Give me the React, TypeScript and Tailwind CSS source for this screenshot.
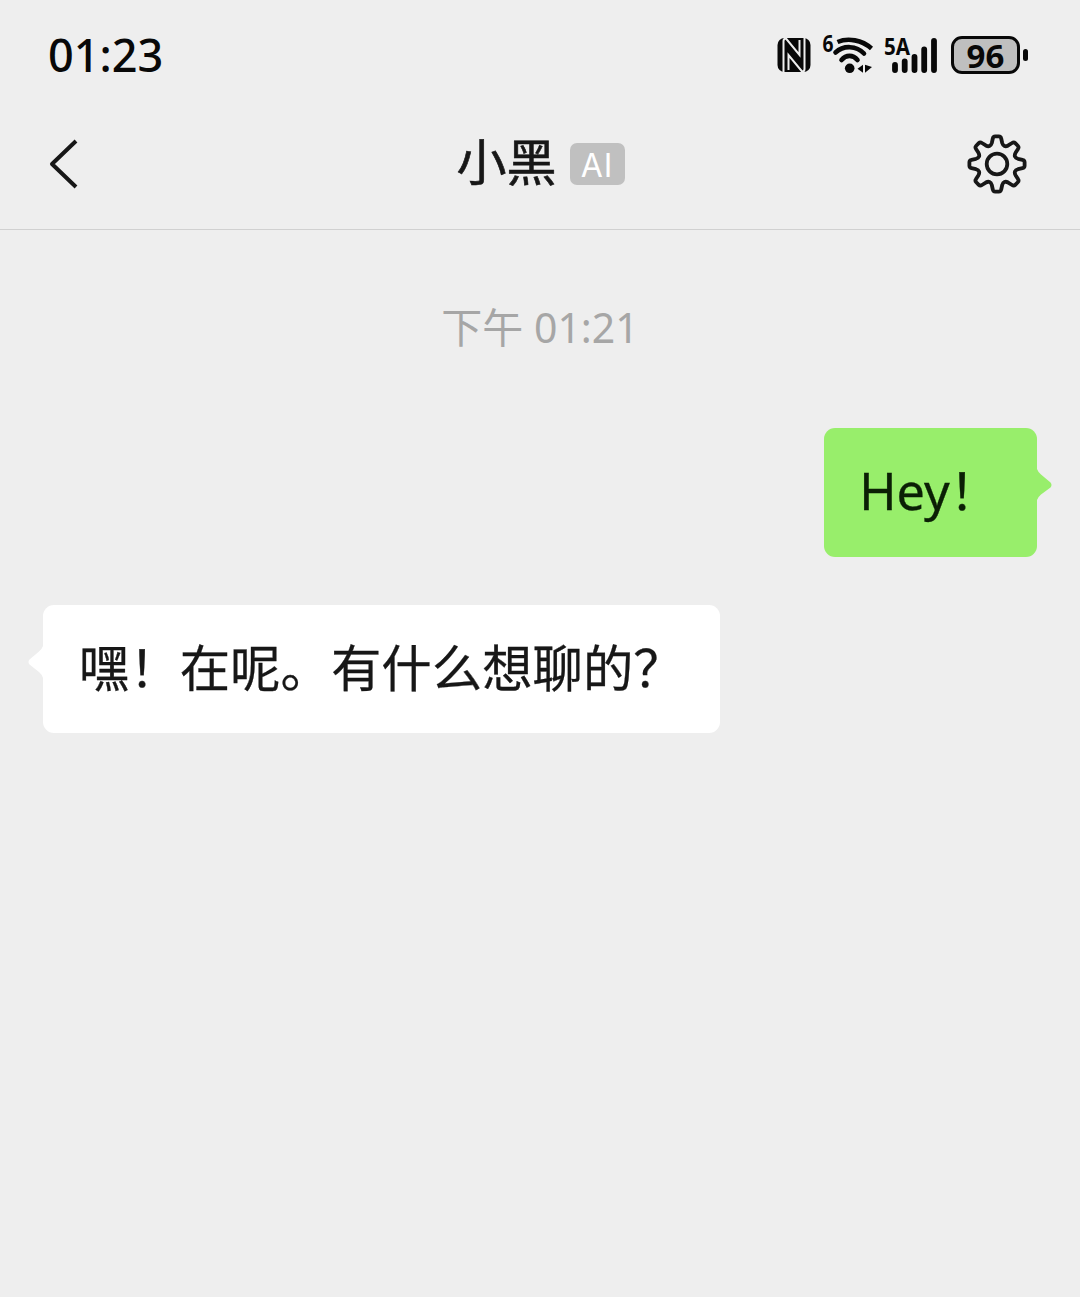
import React from 'react';

const messages = [
  { id: 1, mine: true, text: 'Hey！' },
  { id: 2, mine: false, text: '嘿！在呢。有什么想聊的？' },
];

// one tooth of the gear, pointing up, then the notch towards the next one
const tooth: number[][] = [
  [-5.2, -21], [-4.2, -25.5], [-3.8, -27.6], [-1.8, -27.6],
  [1.8, -27.6], [3.8, -27.6], [4.2, -25.5],
  [5.2, -21], [6.2, -17.8],
];

function gearPath() {
  let d = '';
  for (let i = 0; i < 8; i++) {
    const a = (i * Math.PI) / 4;
    const p = tooth.map(([x, y]) => {
      const px = 30 + x * Math.cos(a) - y * Math.sin(a);
      const py = 30 + x * Math.sin(a) + y * Math.cos(a);
      return `${px.toFixed(2)} ${py.toFixed(2)}`;
    });
    const b = a + Math.PI / 4;
    const nx = 30 + -6.2 * Math.cos(b) + 17.8 * Math.sin(b);
    const ny = 30 + -6.2 * Math.sin(b) - 17.8 * Math.cos(b);
    const ex = 30 + -5.2 * Math.cos(b) + 21 * Math.sin(b);
    const ey = 30 + -5.2 * Math.sin(b) - 21 * Math.cos(b);
    d += `${i === 0 ? 'M' : 'L'}${p[0]}L${p[1]}Q${p[2]} ${p[3]}L${p[4]}Q${p[5]} ${p[6]}L${p[7]}`;
    d += `C${p[8]} ${nx.toFixed(2)} ${ny.toFixed(2)} ${ex.toFixed(2)} ${ey.toFixed(2)}`;
  }
  return d + 'Z';
}

function NfcIcon() {
  return (
    <svg className="w-[34px] h-[36px]" viewBox="0 0 34 36">
      <rect x="0.5" y="1" width="33" height="34" rx="7" fill="#080808" />
      <path d="M6.500 35V4C6.500 2.500 7.500 1.500 9 1.500L22.500 18V3M27.500 1V32C27.500 33.500 26.500 34.500 25 34.500L11.500 18V33" fill="none" stroke="#eeeeee" strokeWidth="2" />
    </svg>
  );
}

function WifiIcon() {
  return (
    <svg className="w-[54px] h-[60px]" viewBox="-2 -8 54 60">
      <text x="0.500" y="19" fontSize="24" fontWeight="700" fontFamily="'Noto Sans', sans-serif" fill="#080808" textLength="11" lengthAdjust="spacingAndGlyphs">6</text>
      <g fill="none" stroke="#080808" strokeWidth="4.600" strokeLinecap="round">
        <path d="M15.500 9C26 4.500 40 7 49.500 15.500" strokeLinecap="butt" />
        <path d="M13.500 19.500C21.500 12 34.500 12.500 42 20.500" />
        <path d="M19.500 27C24 21.500 31 21.500 35.500 27" />
      </g>
      <circle cx="27.700" cy="35.300" r="4.800" fill="#080808" />
      <path d="M35.500 35.800L41 31.800V39.800ZM43 31.800L50 34L43 39.800Z" fill="#080808" />
    </svg>
  );
}

function SignalIcon() {
  return (
    <svg className="w-[58px] h-[60px]" viewBox="-2 -8 58 60">
      <text x="0" y="21.500" fontSize="23.500" fontWeight="700" fontFamily="'Noto Sans', sans-serif" fill="#080808" textLength="26" lengthAdjust="spacingAndGlyphs">5A</text>
      <g stroke="#080808" strokeWidth="5.800" strokeLinecap="round">
        <path d="M11 32V37M20.700 28.300V37M30.500 24V37M40.200 16.500V37M50 7.800V37" />
      </g>
    </svg>
  );
}

function Battery() {
  return (
    <div className="flex items-center gap-[3px]">
      <div className="flex items-center justify-center w-[69px] h-[38px] rounded-[11px] border-[3px] border-[#080808] bg-[#bfbfbf]">
        <span className="font-['Noto_Sans'] text-[33px] leading-none font-bold text-[#080808]">96</span>
      </div>
      <div className="w-[5px] h-[12px] rounded-full bg-[#080808]" />
    </div>
  );
}

function StatusBar() {
  return (
    <div className="flex items-center justify-between h-[110px] pl-[48px] pr-[52px]">
      <span className="pb-[2px] font-['Noto_Sans'] text-[45px] leading-none font-medium text-[#080808]">01:23</span>
      <div className="flex items-center">
        <NfcIcon />
        <div className="ml-[9px]">
          <WifiIcon />
        </div>
        <div className="ml-2">
          <SignalIcon />
        </div>
        <div className="ml-[11px]">
          <Battery />
        </div>
      </div>
    </div>
  );
}

function Header() {
  return (
    <header className="flex items-center justify-between h-[120px] pl-[48px] pr-[51px] pb-[11px] border-b border-[#d0d0d0]">
      <button type="button" aria-label="返回" className="w-[64px]">
        <svg className="w-[32px] h-[52px]" viewBox="0 0 32 52" fill="none" stroke="#171717" strokeWidth="4">
          <path d="M28 3L4 26L28 49" strokeLinejoin="round" />
        </svg>
      </button>
      <div className="flex items-center pl-1">
        <h1 className="pb-[4px] text-[50px] leading-none font-normal text-[#171717] [-webkit-text-stroke:0.6px_#171717]">小黑</h1>
        <span className="flex items-center justify-center ml-[13px] w-[55px] h-[42px] pt-1 rounded-[7px] bg-[#c0c0c0] font-['Inter'] text-[32px] leading-none tracking-[1px] text-white">
          AI
        </span>
      </div>
      <button type="button" aria-label="设置">
        <svg className="w-[64px] h-[64px]" viewBox="-2 -2 64 64" fill="none" stroke="#171717" strokeWidth="3.800" strokeLinejoin="round">
          <path d={gearPath()} />
          <circle cx="30" cy="30" r="10.300" />
        </svg>
      </button>
    </header>
  );
}

function Bubble({ mine, text }: { mine: boolean; text: string }) {
  if (mine) {
    return (
      <div className="flex justify-end pr-[28px]">
        <div className="h-[129px] pl-[35px] pr-[37px] pt-[38px] rounded-[11px] bg-[#98ee6b] text-[50.400px] leading-[50px] text-[#0b1f05] whitespace-nowrap [-webkit-text-stroke:0.3px_#0b1f05]">
          {text}
        </div>
        <svg className="w-[15px] h-[34px] mt-[40px]" viewBox="0 0 15 34" fill="#98ee6b">
          <path d="M0 1Q1 4 4 6.500L13.500 14.500Q15.500 17 13.500 19.500L4 26.500Q1 29 0 32Z" />
        </svg>
      </div>
    );
  }
  return (
    <div className="flex pl-[28px]">
      <svg className="w-[15px] h-[34px] mt-[40px]" viewBox="0 0 15 34" fill="#ffffff">
        <path d="M15 1Q14 4 11 6.500L1.500 14.500Q-0.500 17 1.500 19.500L11 27Q14 29.500 15 33Z" />
      </svg>
      <div className="h-[128px] px-9 pt-[38px] rounded-[11px] bg-white text-[50.400px] leading-[50px] text-[#171717] whitespace-nowrap [-webkit-text-stroke:0.3px_#171717]">
        {text}
      </div>
    </div>
  );
}

export default function App() {
  return (
    <div className="w-[1080px] h-[1297px] overflow-hidden bg-[#eeeeee] font-['Noto_Sans','Noto_Sans_CJK_SC',sans-serif]">
      <StatusBar />
      <Header />
      <main>
        <p className="pt-[72px] h-[198px] text-center text-[41px] leading-[50px] text-[#a6a6a6]">下午 01:21</p>
        <div className="flex flex-col gap-[48px]">
          {messages.map((m) => (
            <Bubble key={m.id} mine={m.mine} text={m.text} />
          ))}
        </div>
      </main>
    </div>
  );
}
